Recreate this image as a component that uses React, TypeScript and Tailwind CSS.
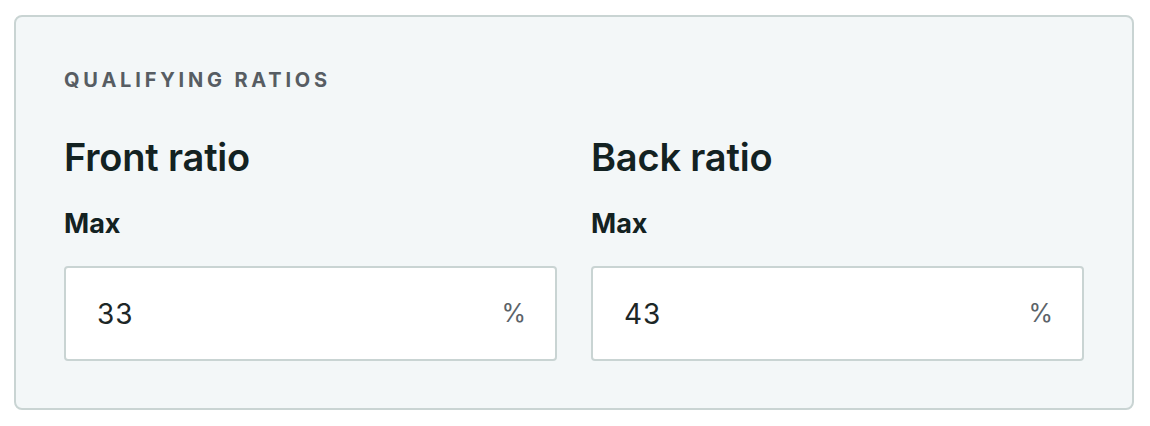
import React from 'react';

const RatioField: React.FC<{ title: string; value: string }> = ({ title, value }) => (
  <div className="flex flex-col">
    <h3 className="text-[38px] leading-[46px] font-semibold text-[#132222] tracking-[-0.005em]">{title}</h3>
    <label className="mt-[28px] text-[27px] leading-[32px] font-bold text-[#132222]">Max</label>
    <div className="mt-[26px] h-[95px] flex items-center justify-between bg-white border-2 border-[#c9d4d3] rounded-[4px] pl-[31px] pr-[29px]">
      <span className="text-[28px] text-[#1c2626] tracking-[0.03em]">{value}</span>
      <span className="text-[25px] text-[#5c6369]">%</span>
    </div>
  </div>
);

export default function App() {
  return (
    <div className="w-[1150px] h-[426px] bg-white pt-[15px] pl-[14px]" style={{ fontFamily: 'Inter, "Noto Sans", sans-serif' }}>
      <div className="w-[1120px] h-[395px] bg-[#f3f7f8] border-2 border-[#c9d4d3] rounded-[8px] px-[48px] pt-[51px]">
        <h2 className="text-[20px] leading-[24px] font-bold tracking-[0.19em] text-[#575d63] uppercase">Qualifying ratios</h2>
        <div className="mt-[42px] grid grid-cols-2 gap-x-[34px]">
          <RatioField title="Front ratio" value="33" />
          <RatioField title="Back ratio" value="43" />
        </div>
      </div>
    </div>
  );
}
